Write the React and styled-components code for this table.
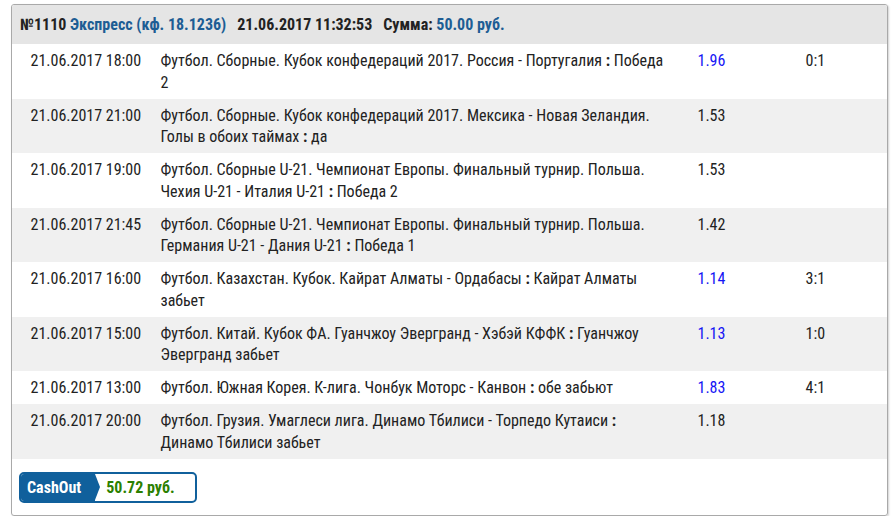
import React from "react";
import styled, { createGlobalStyle } from "styled-components";

const GlobalStyle = createGlobalStyle`
  body {
    margin: 0;
    background: #fff;
    font-family: Roboto, "Liberation Sans", sans-serif;
    color: #222;
  }
`;

// каждая строка события — как в оригинале, " : " выделяется жирным
const bets = [
  { date: "21.06.2017 18:00", lines: ["Футбол. Сборные. Кубок конфедераций 2017. Россия - Португалия : Победа", "2"], coef: "1.96", score: "0:1" },
  { date: "21.06.2017 21:00", lines: ["Футбол. Сборные. Кубок конфедераций 2017. Мексика - Новая Зеландия.", "Голы в обоих таймах : да"], coef: "1.53", score: "" },
  { date: "21.06.2017 19:00", lines: ["Футбол. Сборные U-21. Чемпионат Европы. Финальный турнир. Польша.", "Чехия U-21 - Италия U-21 : Победа 2"], coef: "1.53", score: "" },
  { date: "21.06.2017 21:45", lines: ["Футбол. Сборные U-21. Чемпионат Европы. Финальный турнир. Польша.", "Германия U-21 - Дания U-21 : Победа 1"], coef: "1.42", score: "" },
  { date: "21.06.2017 16:00", lines: ["Футбол. Казахстан. Кубок. Кайрат Алматы - Ордабасы : Кайрат Алматы", "забьет"], coef: "1.14", score: "3:1" },
  { date: "21.06.2017 15:00", lines: ["Футбол. Китай. Кубок ФА. Гуанчжоу Эвергранд - Хэбэй КФФК : Гуанчжоу", "Эвергранд забьет"], coef: "1.13", score: "1:0" },
  { date: "21.06.2017 13:00", lines: ["Футбол. Южная Корея. К-лига. Чонбук Моторс - Канвон : обе забьют"], coef: "1.83", score: "4:1" },
  { date: "21.06.2017 20:00", lines: ["Футбол. Грузия. Умаглеси лига. Динамо Тбилиси - Торпедо Кутаиси :", "Динамо Тбилиси забьет"], coef: "1.18", score: "" },
];

const renderLine = (line) => {
  const parts = line.split(" :");
  return parts.map((part, i) => (
    <React.Fragment key={i}>
      {i > 0 && <Sep> :</Sep>}
      {part}
    </React.Fragment>
  ));
};

const App = () => {
  return (
    <Page>
      <GlobalStyle />
      <Card>
        <Header>
          <span>№1110 </span>
          <Blue>Экспресс (кф. 18.1236)</Blue>
          <Gap />
          <span>21.06.2017 11:32:53</span>
          <Gap />
          <span>Сумма: </span>
          <Blue>50.00 руб.</Blue>
        </Header>
        {bets.map((bet, index) => (
          <Row key={index} $alt={index % 2 === 1}>
            <DateCell>{bet.date}</DateCell>
            <EventCell>
              {bet.lines.map((line, i) => (
                <div key={i}>{renderLine(line)}</div>
              ))}
            </EventCell>
            <CoefCell $played={bet.score !== ""}>{bet.coef}</CoefCell>
            <ScoreCell>{bet.score}</ScoreCell>
          </Row>
        ))}
        <Footer>
          <CashOut>
            <CashLabel>CashOut</CashLabel>
            <CashValue>50.72 руб.</CashValue>
          </CashOut>
        </Footer>
      </Card>
    </Page>
  );
};

const Page = styled.div`
  padding: 4px 8px 0 11px;
`;

const Card = styled.div`
  width: 875px;
  border: 1px solid #a9a9a9;
  border-radius: 3px;
  box-shadow: 1px 1px 2px rgba(0, 0, 0, 0.18);
  overflow: hidden;
  font-stretch: condensed;
`;

const Header = styled.div`
  display: flex;
  align-items: center;
  height: 39px;
  padding-left: 8px;
  background: #e5e5e5;
  font-size: 16px;
  font-weight: 700;
  color: #222;
  white-space: pre;
`;

const Blue = styled.span`
  color: #1d5d94;
`;

const Gap = styled.span`
  width: 11px;
`;

const Row = styled.div`
  display: grid;
  grid-template-columns: 130px 537px 108px 1fr;
  padding: 6px 0 5.5px 18.5px;
  background: ${(p) => (p.$alt ? "#f0f0f0" : "#fff")};
  font-size: 16px;
  line-height: 21.5px;
  color: #222;
`;

const DateCell = styled.div``;

const EventCell = styled.div`
  white-space: nowrap;
`;

const Sep = styled.b`
  font-weight: 700;
`;

const CoefCell = styled.div`
  color: ${(p) => (p.$played ? "#1515f5" : "#222")};
`;

const ScoreCell = styled.div``;

const Footer = styled.div`
  padding: 13px 7px 12px;
`;

const CashOut = styled.div`
  display: inline-flex;
  align-items: stretch;
  width: 178px;
  height: 31px;
  box-sizing: border-box;
  border: 2px solid #10609c;
  border-radius: 5px;
  overflow: hidden;
  font-size: 16px;
  font-weight: 700;
  vertical-align: top;
`;

const CashLabel = styled.div`
  position: relative;
  display: flex;
  align-items: center;
  padding: 0 14px 0 6px;
  background: #10609c;
  color: #fff;

  &::after {
    content: "";
    position: absolute;
    right: -5px;
    top: 0;
    border-top: 13.5px solid transparent;
    border-bottom: 13.5px solid transparent;
    border-left: 5px solid #10609c;
  }
`;

const CashValue = styled.div`
  display: flex;
  align-items: center;
  padding-left: 11px;
  color: #2b8000;
`;

export default App;
